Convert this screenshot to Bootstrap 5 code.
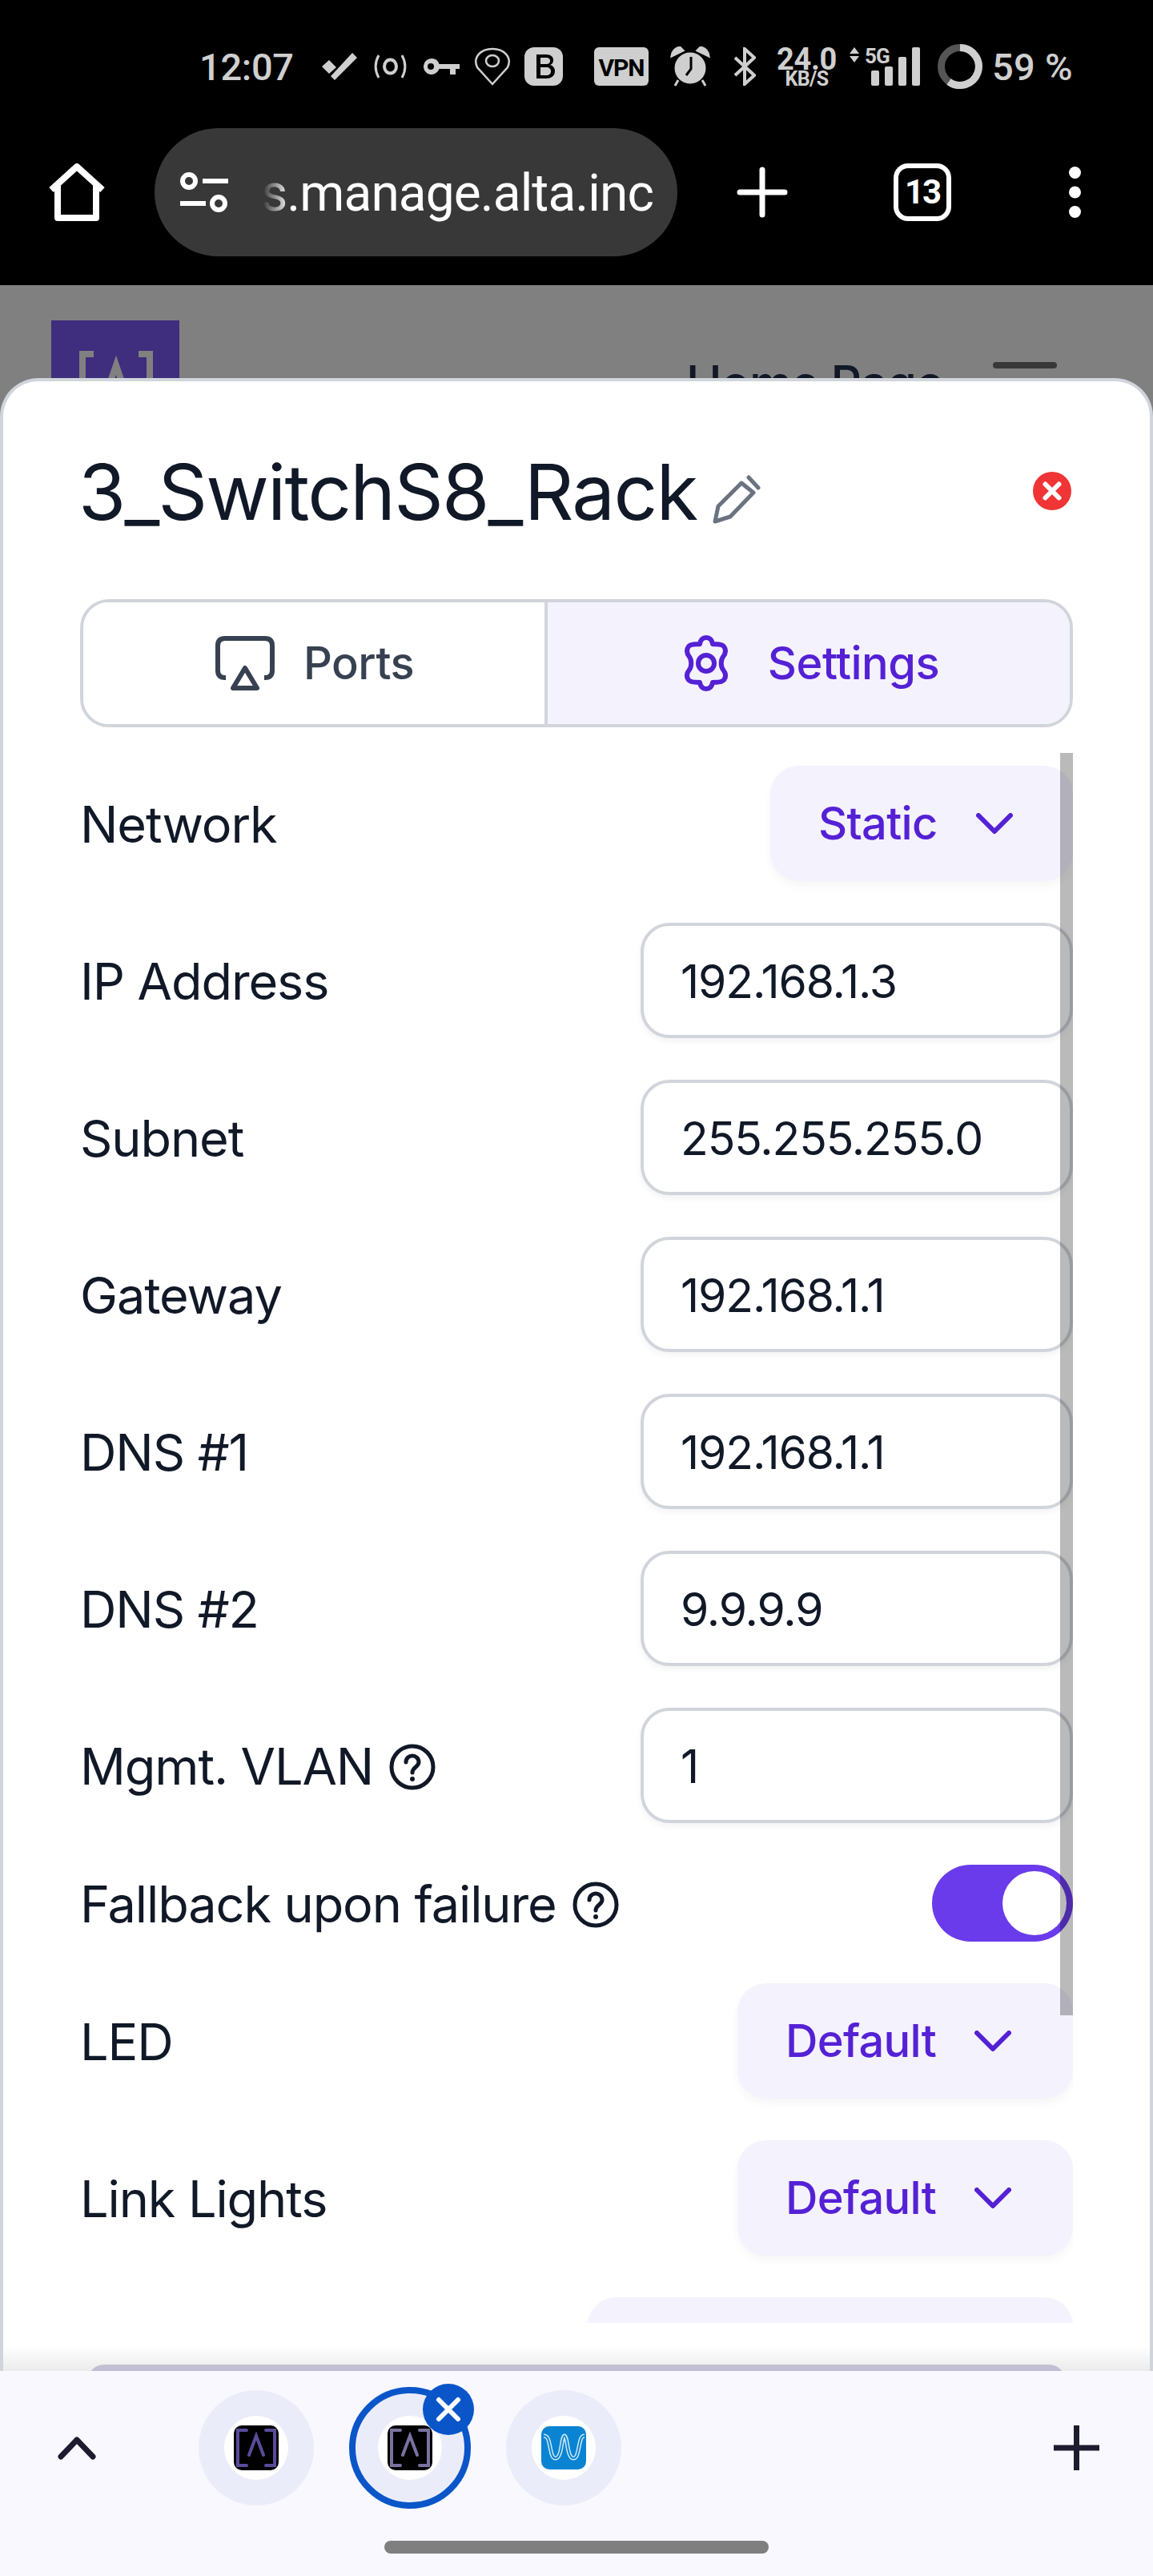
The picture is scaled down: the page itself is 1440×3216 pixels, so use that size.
<!doctype html>
<html lang="en">
<head>
<meta charset="utf-8">
<title>3_SwitchS8_Rack</title>
<link href="https://cdn.jsdelivr.net/npm/bootstrap@5.3.0/dist/css/bootstrap.min.css" rel="stylesheet">
<style>
html,body{margin:0;padding:0;background:#000;}
body{width:1440px;height:3216px;overflow:hidden;font-family:Inter,"Liberation Sans",sans-serif;color:#111827;}
.phone-top{height:356px;background:#000;}
.stat-row{height:160px;padding:6px 0 0 249px;color:#cfcfcf;font-family:Roboto,sans-serif;}
.stat-row svg{display:block;flex:none;}
.stat-time{font-size:47px;font-weight:500;line-height:1;width:116px;margin-right:37px;letter-spacing:-.3px;}
.m-a{margin-left:21px}.m-b{margin-left:17px}.m-c{margin-left:16px}.m-d{margin-left:39px}.m-e{margin-left:27px}.m-f{margin-left:29px}.m-g{margin-left:25px}.m-h{margin-left:14px}.m-j{margin-left:22px}.m-k{margin-left:12px}
.speed{width:77px;text-align:center;font-weight:700;}
.speed-big{font-size:38px;height:30px;line-height:30px;letter-spacing:-.4px;}
.speed-small{font-size:25px;height:19px;line-height:19px;letter-spacing:-.6px;}
.pct{font-size:47px;font-weight:500;line-height:1;letter-spacing:.3px;white-space:nowrap;}
.net-col{width:50px;height:48px;position:relative;}
.net-arrows{position:absolute;left:0;top:0;}
.fiveg{position:absolute;left:20px;top:-2px;font-size:26px;font-weight:700;line-height:1;letter-spacing:-.8px;}
.net-bars{margin-left:-22px;}
.tool-row{height:196px;padding:0 0 36px 60px;}
.tool-row svg{display:block;flex:none;}
.url-pill{width:653px;height:160px;background:#383838;border-radius:80px;margin-left:61px;padding-left:32px;color:#fff;font-family:Roboto,sans-serif;font-size:64px;letter-spacing:-.9px;overflow:hidden;}
.url-text{width:494px;margin-left:37px;white-space:nowrap;overflow:hidden;line-height:1.2;padding-top:4px;-webkit-mask-image:linear-gradient(90deg,transparent 0,transparent 6px,#000 40px);mask-image:linear-gradient(90deg,transparent 0,transparent 6px,#000 40px);}
.url-text span{flex:none;}
.tool-plus{margin-left:74px;}
.tool-tabs{margin-left:132px;width:72px;height:72px;position:relative;}
.tool-count{font:700 42px/1 Roboto,sans-serif;color:#fff;letter-spacing:-2px;}
.tool-dots{margin-left:147px;}
.back-stage{position:relative;height:2604px;background:#808080;overflow:hidden;}
.back-head{padding:44px 0 0 64px;}
.back-logo{width:160px;height:160px;background:#3f2d7d;padding:38px 0 0 35px;flex:none;}
.back-title{margin-left:633px;padding-top:48px;font-size:60px;font-weight:500;line-height:1;color:#111827;white-space:nowrap;width:383px;letter-spacing:-1px;}
.back-burger{width:80px;height:8px;border-radius:4px;background:#383838;margin-top:52px;}
.sheet{position:absolute;left:0;right:0;top:116px;bottom:0;background:#fff;border:4px solid #d1d5db;border-bottom:0;border-radius:48px 48px 0 0;padding:0 96px;overflow:hidden;}
.sheet-title{height:272px;padding-top:4px;}
.sheet-title h1{font-family:Inter,sans-serif;font-size:96px;font-weight:400;margin:0 0 0 -2px;line-height:1;color:#111827;letter-spacing:-1.8px;white-space:nowrap;}
.pencil{margin-left:20px;margin-top:20px;flex:none;}
.close-x{margin-left:auto;margin-right:2px;margin-top:-2px;flex:none;}
.tabs-seg{height:160px;border:4px solid #d1d5db;border-radius:36px;overflow:hidden;font-size:56px;font-weight:500;letter-spacing:-.5px;}
.seg-one{width:580px;color:#374151;background:#fff;border-right:4px solid #d1d5db;gap:36px;padding-left:2px;}
.seg-two{flex:1;color:#5521d5;background:#f4f2fd;gap:44px;padding-left:2px;}
.sheet-rows{height:1944px;overflow:hidden;position:relative;margin-top:48px;}
.set-row{height:144px;margin-bottom:52px;font-size:63px;line-height:1;letter-spacing:-1.1px;}
.set-row.short-row{height:96px;}
.set-row>span{padding-top:3px;}
.pick{height:144px;border-radius:36px;background:#f4f2fd;color:#5521d5;font-weight:500;font-size:56px;letter-spacing:-.7px;padding-left:60px;gap:48px;box-shadow:0 6px 12px rgba(17,24,39,.04);}
.pick-static{width:378px;}
.pick-default{width:419px;}
.pick-blank{width:606px;}
.field-box{width:540px;height:144px;border:4px solid #d1d5db;border-radius:36px;padding:3px 46px 0;font-size:57px;letter-spacing:-1.1px;font-weight:400;color:#111827;background:#fff;box-shadow:0 4px 8px rgba(17,24,39,.05);display:flex;align-items:center;}
.toggle-pill{width:176px;height:96px;background:#6a3bea;border-radius:48px;padding-right:8px;}
.toggle-knob{width:80px;height:80px;border-radius:50%;background:#fff;}
.help{margin-left:20px;flex:none;}
.scroll-thumb{position:absolute;left:1320px;top:464px;width:16px;height:1576px;background:rgba(0,0,0,.27);}
.sheet-fade{position:absolute;left:0;right:0;bottom:0;height:32px;background:linear-gradient(180deg,rgba(255,255,255,0),rgba(0,0,0,.08));z-index:2;}
.save-strip{position:absolute;left:106px;width:1220px;height:20px;bottom:-12px;background:#cfcde3;border-radius:24px 24px 0 0;}
.tab-strip{height:256px;background:#f8f8fe;position:relative;}
.strip-main{height:192px;padding:0 67px 0 72px;}
.strip-main svg{display:block;flex:none;}
.app-disc{width:144px;height:144px;border-radius:50%;background:#eaedf9;flex:none;}
.app-inner{width:80px;height:80px;border-radius:50%;background:#fff;}
.disc-one{margin-left:128px;}
.disc-two{margin-left:48px;position:relative;}
.disc-ring{position:absolute;inset:-4px;border:8px solid #0a56c9;border-radius:50%;}
.disc-x{position:absolute;left:88px;top:-8px;width:64px;height:64px;border-radius:50%;background:#0a56c9;}
.disc-three{margin-left:48px;margin-right:auto;}
.home-bar{position:absolute;left:480px;top:212px;width:480px;height:16px;border-radius:8px;background:#7f7f7f;}
</style>
</head>
<body>
<header class="phone-top">
  <div class="stat-row d-flex align-items-center">
    <span class="stat-time">12:07</span>
    <svg width="44" height="34" viewBox="0 0 44 34"><path d="M0 17 9 9l9 9-9 8zM14 26 38 0l6 6-28 28-5-5z" fill="#cfcfcf"/></svg>
    <svg class="m-a" width="41" height="32" viewBox="0 0 41 32" fill="none" stroke="#cfcfcf" stroke-width="3"><path d="M6 2C1 11 1 21 6 30M35 2c5 9 5 19 0 28"/><ellipse cx="20.500" cy="16" rx="7.500" ry="8.500" stroke-width="4"/></svg>
    <svg class="m-a" width="45" height="20" viewBox="0 0 45 20"><path d="M10 0a10 10 0 0 1 9.500 7H45v6h-5v7h-7v-7H19.500A10 10 0 1 1 10 0z" fill="#cfcfcf"/><circle cx="9" cy="10" r="4" fill="#000"/></svg>
    <svg class="m-b" width="48" height="48" viewBox="0 0 48 48" fill="none" stroke="#cfcfcf" stroke-width="2.500"><path d="M24 46 5 25C-1 12 10 2 24 2s25 10 19 23z"/><ellipse cx="24" cy="17" rx="8" ry="7"/></svg>
    <svg class="m-c" width="48" height="48" viewBox="0 0 48 48"><rect width="48" height="48" rx="12" fill="#cfcfcf"/><path d="M15 9h12c6 0 9 3 9 7 0 3-1 5-4 6 4 1 6 4 6 8 0 6-5 9-11 9H15V13zm5 4v8h7c3 0 5-1 5-4s-2-4-5-4zm0 12v10h7c4 0 6-2 6-5s-2-5-6-5z" fill="#000"/></svg>
    <svg class="m-d" width="68" height="48" viewBox="0 0 68 48"><rect width="68" height="48" rx="6" fill="#cfcfcf"/><text x="34" y="36" text-anchor="middle" font-family="Roboto,sans-serif" font-weight="700" font-size="30" letter-spacing="-1" fill="#000">VPN</text></svg>
    <svg class="m-e" width="50" height="50" viewBox="0 0 50 50"><circle cx="25" cy="27" r="19.500" fill="#cfcfcf"/><path d="M2 12C3 5 7 2 12 1l4 4zM48 12c-1-7-5-10-10-11l-4 4zM10 42l-4 7M40 42l4 7" fill="#cfcfcf" stroke="#cfcfcf" stroke-width="3"/><path d="M26 13v15l-6 8" fill="none" stroke="#000" stroke-width="3"/></svg>
    <svg class="m-f" width="28" height="48" viewBox="0 0 28 48" fill="none" stroke="#cfcfcf" stroke-width="4"><path d="M2 13 26 35 14 46V2l12 11L2 35"/></svg>
    <div class="m-g speed"><div class="speed-big">24.0</div><div class="speed-small">KB/S</div></div>
    <div class="m-h net-col">
      <svg class="net-arrows" width="14" height="19" viewBox="0 0 14 19"><path d="M7 0l6 8H1zM7 19l6-8H1z" fill="#cfcfcf"/></svg>
      <span class="fiveg">5G</span>
    </div>
    <svg class="net-bars" width="61" height="48" viewBox="0 0 61 48" fill="#cfcfcf"><rect x="0" y="29" width="10" height="19" rx="2"/><rect x="17" y="24" width="10" height="24" rx="2"/><rect x="34" y="12" width="10" height="36" rx="2"/><rect x="51" y="0" width="10" height="48" rx="2"/></svg>
    <svg class="m-j" width="56" height="56" viewBox="0 0 56 56" fill="none" stroke-width="9"><circle cx="28" cy="28" r="23.500" stroke="#555"/><path d="M28 4.500A23.500 23.500 0 1 1 14 47" stroke="#cfcfcf"/></svg>
    <span class="pct m-k">59 %</span>
  </div>
  <div class="tool-row d-flex align-items-center">
    <svg width="72" height="72" viewBox="0 0 72 72" fill="none" stroke="#fff" stroke-width="8" stroke-linejoin="round"><path d="M4 33 36 4l32 29M12 28v40h48V28"/></svg>
    <div class="url-pill d-flex align-items-center">
      <svg width="60" height="50" viewBox="0 0 60 50" fill="none" stroke="#fff" stroke-width="6"><circle cx="11" cy="11" r="8"/><circle cx="48" cy="39" r="8"/><path d="M28 11h32M0 39h32"/></svg>
      <div class="url-text d-flex justify-content-end"><span>s.manage.alta.inc</span></div>
    </div>
    <svg class="tool-plus" width="64" height="64" viewBox="0 0 64 64" stroke="#fff" stroke-width="7" stroke-linecap="round"><path d="M32 4v56M4 32h56"/></svg>
    <div class="tool-tabs">
      <svg width="72" height="72" viewBox="0 0 72 72" fill="none" stroke="#fff" stroke-width="6"><rect x="3" y="3" width="66" height="66" rx="15"/></svg>
      <span class="tool-count position-absolute top-50 start-50 translate-middle">13</span>
    </div>
    <svg class="tool-dots" width="15" height="64" viewBox="0 0 15 64" fill="#fff"><circle cx="7.500" cy="7.500" r="7.500"/><circle cx="7.500" cy="32" r="7.500"/><circle cx="7.500" cy="56.500" r="7.500"/></svg>
  </div>
</header>

<main class="back-stage">
  <div class="back-head d-flex">
    <div class="back-logo"><svg width="92" height="90" viewBox="0 0 92 90" fill="none" stroke="#808080" stroke-width="8"><path d="M18 4H4v82h14M74 4h14v82H74M28 70 46 18l18 52"/></svg></div>
    <div class="back-title">Home Page</div>
    <div class="back-burger"></div>
  </div>
  <section class="sheet">
    <div class="sheet-title d-flex align-items-center">
      <h1>3_SwitchS8_Rack</h1>
      <svg class="pencil" width="62" height="62" viewBox="0 0 62 62" fill="none" stroke="#6b7280" stroke-width="5" stroke-linejoin="round" stroke-linecap="round"><path d="M3 58 7 39 36 10 51 22 22 52zM45 3l12 13"/></svg>
      <svg class="close-x" width="48" height="48" viewBox="0 0 48 48"><circle cx="24" cy="24" r="24" fill="#ef3535"/><path d="M15.500 15.500l17 17M32.500 15.500l-17 17" stroke="#fff" stroke-width="6" stroke-linecap="round"/></svg>
    </div>
    <div class="tabs-seg d-flex">
      <div class="seg-one d-flex align-items-center justify-content-center">
        <svg width="74" height="68" viewBox="0 0 74 68" fill="none" stroke="#374151" stroke-width="6" stroke-linejoin="round"><path d="M13 52H12Q3 52 3 43V12Q3 3 12 3H62Q71 3 71 12V43Q71 52 62 52H61"/><path d="M37 40 52 65H22z"/></svg>
        <span>Ports</span>
      </div>
      <div class="seg-two d-flex align-items-center justify-content-center">
        <svg width="66" height="70" viewBox="0 0 66 70" fill="none" stroke="#5521d5" stroke-width="6" stroke-linejoin="round"><path d="M25 11C26 5 29 3 33 3s7 2 8 8c5 1 10-1 14 3 3 4 3 8-1 13-3 4-3 12 0 16 4 5 4 9 1 13-4 4-9 2-14 3-1 6-4 8-8 8s-7-2-8-8c-5-1-10 1-14-3-3-4-3-8 1-13 3-4 3-12 0-16-4-5-4-9-1-13 4-4 9-2 14-3z"/><circle cx="33" cy="35" r="10"/></svg>
        <span>Settings</span>
      </div>
    </div>
    <div class="sheet-rows">
      <div class="set-row d-flex align-items-center justify-content-between"><span>Network</span><div class="pick pick-static d-flex align-items-center"><span>Static</span><svg width="46" height="26" viewBox="0 0 46 26" fill="none" stroke="#5521d5" stroke-width="6" stroke-linecap="round" stroke-linejoin="round"><path d="M3 3l20 20L43 3"/></svg></div></div>
      <div class="set-row d-flex align-items-center justify-content-between"><span>IP Address</span><div class="form-control field-box">192.168.1.3</div></div>
      <div class="set-row d-flex align-items-center justify-content-between"><span>Subnet</span><div class="form-control field-box">255.255.255.0</div></div>
      <div class="set-row d-flex align-items-center justify-content-between"><span>Gateway</span><div class="form-control field-box">192.168.1.1</div></div>
      <div class="set-row d-flex align-items-center justify-content-between"><span>DNS #1</span><div class="form-control field-box">192.168.1.1</div></div>
      <div class="set-row d-flex align-items-center justify-content-between"><span>DNS #2</span><div class="form-control field-box">9.9.9.9</div></div>
      <div class="set-row d-flex align-items-center justify-content-between"><span class="d-flex align-items-center">Mgmt. VLAN<svg class="help" width="58" height="58" viewBox="0 0 58 58" fill="none" stroke="#111827" stroke-width="5"><circle cx="29" cy="29" r="26"/><path d="M21 23c0-5 4-8 8-8s8 3 8 8c0 6-8 6-8 13" stroke-linecap="round"/><circle cx="29" cy="44" r="2" fill="#111827" stroke-width="2"/></svg></span><div class="form-control field-box">1</div></div>
      <div class="set-row short-row d-flex align-items-center justify-content-between"><span class="d-flex align-items-center">Fallback upon failure<svg class="help" width="58" height="58" viewBox="0 0 58 58" fill="none" stroke="#111827" stroke-width="5"><circle cx="29" cy="29" r="26"/><path d="M21 23c0-5 4-8 8-8s8 3 8 8c0 6-8 6-8 13" stroke-linecap="round"/><circle cx="29" cy="44" r="2" fill="#111827" stroke-width="2"/></svg></span><div class="toggle-pill d-flex align-items-center justify-content-end"><div class="toggle-knob"></div></div></div>
      <div class="set-row d-flex align-items-center justify-content-between"><span>LED</span><div class="pick pick-default d-flex align-items-center"><span>Default</span><svg width="46" height="26" viewBox="0 0 46 26" fill="none" stroke="#5521d5" stroke-width="6" stroke-linecap="round" stroke-linejoin="round"><path d="M3 3l20 20L43 3"/></svg></div></div>
      <div class="set-row d-flex align-items-center justify-content-between"><span>Link Lights</span><div class="pick pick-default d-flex align-items-center"><span>Default</span><svg width="46" height="26" viewBox="0 0 46 26" fill="none" stroke="#5521d5" stroke-width="6" stroke-linecap="round" stroke-linejoin="round"><path d="M3 3l20 20L43 3"/></svg></div></div>
      <div class="set-row d-flex align-items-center justify-content-end"><div class="pick pick-blank"></div></div>
    </div>
    <div class="scroll-thumb"></div>
    <div class="sheet-fade"></div>
    <div class="save-strip"></div>
  </section>
</main>

<footer class="tab-strip">
  <div class="strip-main d-flex align-items-center">
    <svg width="48" height="30" viewBox="0 0 48 30" fill="none" stroke="#1d1b2e" stroke-width="7" stroke-linecap="round" stroke-linejoin="round"><path d="M4 26 24 5l20 21"/></svg>
    <div class="app-disc disc-one d-flex align-items-center justify-content-center"><div class="app-inner d-flex align-items-center justify-content-center"><svg width="56" height="56" viewBox="0 0 56 56" fill="none"><rect width="56" height="56" rx="10" fill="#000"/><path d="M16 6H5v44h11M40 6h11v44H40M19 37 28 13l9 24" stroke="#5b4a9a" stroke-width="4" stroke-linecap="round"/></svg></div></div>
    <div class="app-disc disc-two d-flex align-items-center justify-content-center"><div class="disc-ring"></div><div class="app-inner d-flex align-items-center justify-content-center"><svg width="56" height="56" viewBox="0 0 56 56" fill="none"><rect width="56" height="56" rx="10" fill="#000"/><path d="M16 6H5v44h11M40 6h11v44H40M19 37 28 13l9 24" stroke="#7a719f" stroke-width="4" stroke-linecap="round"/></svg></div><div class="disc-x d-flex align-items-center justify-content-center"><svg width="32" height="32" viewBox="0 0 32 32" stroke="#fff" stroke-width="6" stroke-linecap="round"><path d="M4 4l24 24M28 4 4 28"/></svg></div></div>
    <div class="app-disc disc-three d-flex align-items-center justify-content-center"><div class="app-inner d-flex align-items-center justify-content-center"><svg width="56" height="54" viewBox="0 0 56 54" fill="none"><rect width="56" height="54" rx="10" fill="#0a84d2"/><path d="M3 12c5 0 6 4 8 14s3 14 7 14 6-8 7-14 2-14 4-14 3 8 4 14 3 14 7 14 5-4 7-14 3-14 7-14" stroke="#cfeaf9" stroke-width="5"/><path d="M3 12c5 0 6 4 8 14s3 14 7 14 6-8 7-14 2-14 4-14 3 8 4 14 3 14 7 14 5-4 7-14 3-14 7-14" stroke="#0a84d2" stroke-width="2"/></svg></div></div>
    <svg width="57" height="56" viewBox="0 0 57 56" stroke="#1d1b2e" stroke-width="7"><path d="M28.500 0v56M0 28h57"/></svg>
  </div>
  <div class="home-bar"></div>
</footer>
<script src="https://cdn.jsdelivr.net/npm/bootstrap@5.3.0/dist/js/bootstrap.bundle.min.js"></script>
</body>
</html>
